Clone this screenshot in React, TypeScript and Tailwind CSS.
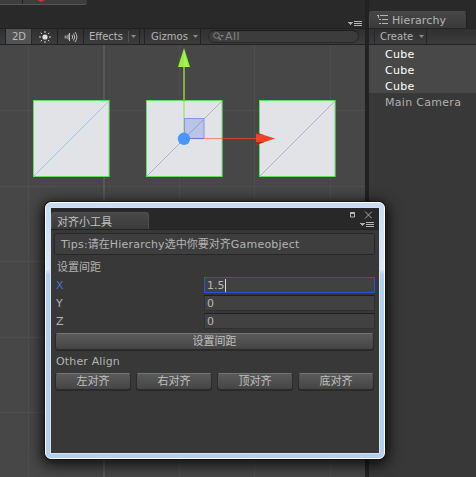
import type { ReactNode } from "react";

const raised =
  "flex h-[17px] items-center justify-center rounded-[3px] border border-[#2b2b2b] border-t-[#747474] bg-linear-to-b from-[#5a5a5a] to-[#454545] text-[11px] text-[#c0c0c0] shadow-[0_1px_0_#292929]";

function Caret() {
  return (
    <svg width="5" height="3" viewBox="0 0 5 3" className="shrink-0">
      <path d="M0 0H5L2.5 3Z" fill="#8c8c8c" />
    </svg>
  );
}

function PaneMenu() {
  return (
    <svg width="14" height="6" viewBox="0 0 14 6" className="shrink-0" shapeRendering="crispEdges">
      <path d="M0 1H5L2.5 4Z" fill="#a8a8a8" />
      <path d="M6 0.5H14M6 2.5H14M6 4.5H14" stroke="#b4b4b4" />
    </svg>
  );
}

function Scene() {
  const cubes = [33, 146, 259];
  return (
    <svg width="365" height="432" viewBox="0 45 365 432" className="block">
      <rect y="45" width="365" height="432" fill="#474747" />
      <g stroke="#515151" fill="none">
        <path d="M28.5 45V477M179.5 45V477M254.5 45V477M330.5 45V477" stroke="#4e4e4e" />
        <path d="M0 110.5H365M0 186.5H365M0 261.5H365M0 337.5H365M0 412.5H365" stroke="#4f4f4f" />
        <path d="M104 45V477" stroke="#575757" strokeWidth="2" />
      </g>
      {cubes.map((x, i) => (
        <g key={x}>
          <rect x={x + 0.5} y="100.5" width="75.6" height="76" fill="#e2e3e7" stroke="#65dc60" />
          <path d={`M${x + 1} 176L${x + 76} 101`} stroke={i === 0 ? "#a0c2f4" : "#adb0c7"} />
        </g>
      ))}
      <path d="M184 66V101" stroke="#7bae43" strokeWidth="2" />
      <path d="M184 101V138" stroke="#b7e598" strokeWidth="2" />
      <rect x="184.5" y="118.5" width="19.5" height="20" fill="#bac4e6" stroke="#8298e4" />
      <path d="M185 138L204 119" stroke="#98a5ce" />
      <path d="M184 138.5H204" stroke="#6677c6" />
      <path d="M204 138.5H222" stroke="#ec8b82" />
      <path d="M222 138.5H257" stroke="#d04330" />
      <path d="M184 48L190 67H178Z" fill="#98ed42" />
      <path d="M184 50V67H188Z" fill="#b0fa62" opacity=".55" />
      <path d="M256 132.5L275 138.5L256 145Z" fill="#f04428" />
      <path d="M256 132.5L264 135L256 134Z M256 145L264 142L256 142Z" fill="#a92516" />
      <circle cx="184" cy="138.8" r="6.2" fill="#4995fc" />
    </svg>
  );
}

function SceneToolbar() {
  return (
    <div className="flex h-[17px] items-center border-t border-b border-t-[#202020] border-b-[#222] bg-linear-to-b from-[#303030] to-[#3c3c3c] text-[10px] text-[#b4b4b4]">
      <div className="h-full w-[6px] border-r border-[#222]" />
      <div className="flex h-full w-[26px] items-center justify-center border-r border-[#292929] bg-[#535353] pl-px text-[#bcbcbc]">2D</div>
      <div className="flex h-full w-[26px] items-center justify-center border-r border-[#222]">
        <svg width="12" height="12" viewBox="0 0 12 12">
          <circle cx="6" cy="6" r="2.6" fill="#e0e0e0" />
          <path d="M6 0V2M6 10V12M0 6H2M10 6H12M1.7 1.7L3 3M9 9L10.3 10.3M1.7 10.3L3 9M9 3L10.3 1.7" stroke="#d2d2d2" />
        </svg>
      </div>
      <div className="flex h-full w-[26px] items-center justify-center border-r border-[#222]">
        <svg width="14" height="12" viewBox="0 0 14 12" fill="none">
          <path d="M0.5 4.5H3L6 1.8V10.2L3 7.5H0.5Z" fill="#868686" />
          <path d="M5.5 2V10" stroke="#c0c0c0" />
          <path d="M8 4Q9.4 6 8 8M9.5 2.5Q12 6 9.5 9.5M11 1Q14.8 6 11 11" stroke="#bcbcbc" />
        </svg>
      </div>
      <div className="flex h-full w-[56px] items-center border-r border-[#222] pl-[5px]">
        <span className="w-[39px]">Effects</span>
        <div className="mr-[2px] h-[11px] w-px bg-[#515151]" />
        <Caret />
      </div>
      <div className="h-full w-[5px] border-r border-[#222]" />
      <div className="flex h-full w-[56px] items-center border-r border-[#222] pl-[6px]">
        <span className="w-[42px]">Gizmos</span>
        <Caret />
      </div>
      <div className="ml-[7px] flex h-[13px] w-[151px] items-center rounded-full border border-[#272727] border-t-[#1e1e1e] bg-[#3c3c3c] pl-[4px] text-[#858585] tracking-[0.4px]">
        <svg width="11" height="9" viewBox="0 0 11 9" fill="none" stroke="#858585">
          <circle cx="3.5" cy="3.5" r="2.8" />
          <path d="M5.5 5.5L8 8" strokeWidth="1.4" />
          <path d="M7 3H11L9 5Z" fill="#858585" stroke="none" />
        </svg>
        <span className="pl-px text-[11px] leading-[11px]">All</span>
      </div>
    </div>
  );
}

function Hierarchy() {
  return (
    <div className="flex w-[107px] shrink-0 flex-col bg-[#383838]">
      <div className="flex h-[28px] items-end bg-[#292929]">
        <div className="flex h-[17px] w-[98px] items-center rounded-t-[3px] border border-b-0 border-[#4a4a4a] border-r-[#202020] bg-linear-to-b from-[#464646] to-[#3a3a3a] pl-[7px] text-[#b4b4b4]">
          <svg width="11" height="9" viewBox="0 0 11 9" className="mr-[4px] mb-px shrink-0" stroke="#b4b4b4" shapeRendering="crispEdges">
            <path d="M0 .5H2M3 .5H11M2 4.5H4M5 4.5H11M2 8.5H4M5 8.5H11M1.5 1V3" />
          </svg>
          <span className="pt-[2px] tracking-[0.1px]">Hierarchy</span>
        </div>
      </div>
      <div className="flex h-[17px] border-t border-b border-t-[#262626] border-b-[#222] bg-linear-to-b from-[#303030] to-[#3c3c3c]">
        <div className="w-[6px] border-r border-[#262626]" />
        <div className="flex w-[52px] items-center border-r border-[#262626] pl-[5px] text-[10px] text-[#b4b4b4]">
          <span className="w-[39px]">Create</span>
          <Caret />
        </div>
      </div>
      <div className="flex flex-col text-[#b0b0b0] tracking-[0.3px]">
        <div className="bg-[#484848] text-white">
          {["a", "b", "c"].map((key) => (
            <div key={key} className="flex h-[16px] items-center pt-[3px] pl-[16px]">Cube</div>
          ))}
        </div>
        <div className="flex h-[16px] items-center pt-[3px] pl-[16px] whitespace-nowrap">Main Camera</div>
      </div>
    </div>
  );
}

function NumberRow({ label, value, focused = false }: { label: string; value: string; focused?: boolean }) {
  return (
    <div className="flex h-[16px] items-center">
      <span className={`w-[149px] pt-[2px] pl-px ${focused ? "text-[#4b72d5]" : "text-[#b4b4b4]"}`}>{label}</span>
      <div className={`flex h-[16px] flex-1 items-center border bg-[#414141] pl-[2px] text-[#b8b8b8] ${focused ? "border-[#2b50dc]" : "border-[#303030] border-t-[#1f1f1f]"}`}>
        <span className="pt-[2px]">{value}</span>
        {focused && <i className="h-[13px] w-px bg-[#d8d8d8]" />}
      </div>
    </div>
  );
}

function AlignButton({ children }: { children: ReactNode }) {
  return <div className={`${raised} w-[76px]`}>{children}</div>;
}

function ToolWindow() {
  return (
    <div className="absolute top-[202px] left-[45px] h-[257px] w-[340px] rounded-[6px] border border-white bg-linear-to-b from-[#c6dcf3] via-[#dce8f4] via-26% to-[#b2d0ee] to-28% p-[5px] shadow-[0_0_0_1px_#151515,0_3px_14px_3px_rgba(0,0,0,0.8)]">
      <div className="flex h-full w-full flex-col bg-[#383838] shadow-[0_0_0_1px_#d5e2ee]">
        <div className="flex h-[22px] shrink-0 items-end justify-between border-b border-[#222] bg-[#282828]">
          <div className="flex h-[17px] w-[98px] items-center rounded-t-[3px] border border-b-0 border-[#505050] bg-linear-to-b from-[#484848] to-[#3a3a3a] pt-[3px] pl-[5px] text-[#c0c0c0]">
            对齐小工具
          </div>
          <div className="flex h-[21px] flex-col items-end justify-between pt-[3px] pr-[5px] pb-px">
            <svg width="22" height="8" viewBox="0 0 22 8" fill="none" className="mr-[2px]">
              <path d="M.5 2H4.5V6H.5Z" stroke="#b4b4b4" />
              <path d="M0 2H5" stroke="#b4b4b4" strokeWidth="2" />
              <path d="M15 .5L22 7.5M22 .5L15 7.5" stroke="#a8a8a8" />
            </svg>
            <PaneMenu />
          </div>
        </div>
        <div className="flex flex-col pt-[3px] pr-[4px] pl-[4px] text-[#b4b4b4]">
          <div className="-ml-px flex h-[22px] items-center rounded-[3px] border border-[#272727] bg-[#3e3e3e] pt-px pl-[6px] tracking-[0.2px] whitespace-nowrap">
            <span>Tips:<span className="tracking-normal">请在</span>Hierarchy<span className="tracking-normal">选中你要对齐</span>Gameobject</span>
          </div>
          <div className="mt-[4px] flex h-[16px] items-center pt-[2px] pl-[2px]">设置间距</div>
          <div className="mt-[2px] flex flex-col gap-[2px]">
            <NumberRow label="X" value="1.5" focused />
            <NumberRow label="Y" value="0" />
            <NumberRow label="Z" value="0" />
          </div>
          <div className={`${raised} mt-[4px] mr-px`}>设置间距</div>
          <div className="mt-[3px] flex h-[16px] items-center pt-[2px] pl-px tracking-[0.15px]">Other Align</div>
          <div className="mt-[4px] mr-px flex justify-between">
            <AlignButton>左对齐</AlignButton>
            <AlignButton>右对齐</AlignButton>
            <AlignButton>顶对齐</AlignButton>
            <AlignButton>底对齐</AlignButton>
          </div>
        </div>
      </div>
    </div>
  );
}

export default function App() {
  return (
    <div className="relative flex h-[477px] w-[476px] overflow-hidden bg-[#222] font-['DejaVu_Sans','Noto_Sans_CJK_SC',sans-serif] text-[11px] leading-[14px]">
      <div className="mr-[4px] flex w-[365px] shrink-0 flex-col">
        <div className="flex h-[28px] items-start justify-between bg-[#292929]">
          <div className="flex h-[5px] w-[87px] rounded-br-[3px] border-b border-[#565656] bg-[#3d3d3d]">
            <div className="w-[23px] border-r border-[#222]" />
            <svg width="8" height="3" viewBox="0 0 8 3" className="ml-[14px]">
              <path d="M0 0H8L4 2Z" fill="#c83437" />
            </svg>
          </div>
          <div className="pt-[21px] pr-[3px]"><PaneMenu /></div>
        </div>
        <SceneToolbar />
        <Scene />
      </div>
      <Hierarchy />
      <ToolWindow />
    </div>
  );
}
